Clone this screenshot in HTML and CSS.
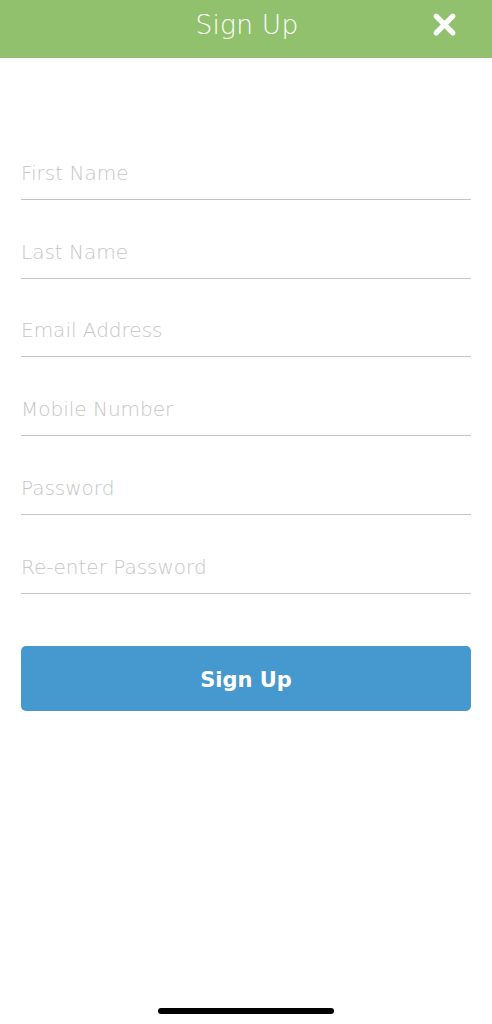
FILE: index.html
```html
<!DOCTYPE html>
<html lang="en">
<head>
<meta charset="utf-8">
<title>Sign Up</title>
<link rel="stylesheet" href="styles.css">
</head>
<body>
<div class="screen">
  <header class="topbar">
    <h1 class="title">Sign Up</h1>
    <button class="close" aria-label="Close">
      <svg viewBox="0 0 24 24" width="24" height="24"><path d="M4 4 L20 20 M20 4 L4 20" stroke="#fff" stroke-width="5" stroke-linecap="round" fill="none"/></svg>
    </button>
  </header>
  <form class="form">
    <label class="field"><span class="placeholder">First Name</span></label>
    <label class="field"><span class="placeholder">Last Name</span></label>
    <label class="field"><span class="placeholder">Email Address</span></label>
    <label class="field"><span class="placeholder">Mobile Number</span></label>
    <label class="field"><span class="placeholder">Password</span></label>
    <label class="field"><span class="placeholder">Re-enter Password</span></label>
    <div class="submit">Sign Up</div>
  </form>
  <div class="home-indicator"></div>
</div>
</body>
</html>
```

FILE: styles.css
```css
* { box-sizing: border-box; }
html, body { margin: 0; padding: 0; background: #fff; }
body { font-family: "DejaVu Sans", "Open Sans", sans-serif; }
.screen { width: 492px; height: 1024px; position: relative; display: flex; flex-direction: column; }
.topbar {
  height: 58px; background: #92c16e; position: relative;
  display: flex; align-items: center; justify-content: center;
}
.title {
  margin: 0; color: #fff; font-weight: 200; font-size: 26.5px; letter-spacing: 0.2px;
  font-family: "DejaVu Sans", sans-serif; padding-bottom: 9px; padding-left: 2px;
}
.close {
  position: absolute; right: 35px; top: 12px; width: 25px; height: 25px;
  background: none; border: 0; padding: 0; display: flex;
}
.close svg { width: 25px; height: 25px; }
.form { padding: 63px 21px 0; display: flex; flex-direction: column; }
.field {
  height: 78.8px; border-bottom: 1.5px solid #c4c4c4;
  display: flex; align-items: flex-end; padding-bottom: 14px;
}
.placeholder {
  color: #c6c6c6; font-size: 20px; line-height: 24px; font-weight: 200;
}
.submit {
  margin-top: 52px; height: 65px; border-radius: 5px; background: #4699cf;
  color: #fff; font-weight: 700; font-size: 21px; display: flex;
  align-items: center; justify-content: center; padding-top: 3px;
}
.home-indicator {
  position: absolute; left: 158px; bottom: 10px; width: 176px; height: 6px;
  border-radius: 3px; background: #000;
}
```
